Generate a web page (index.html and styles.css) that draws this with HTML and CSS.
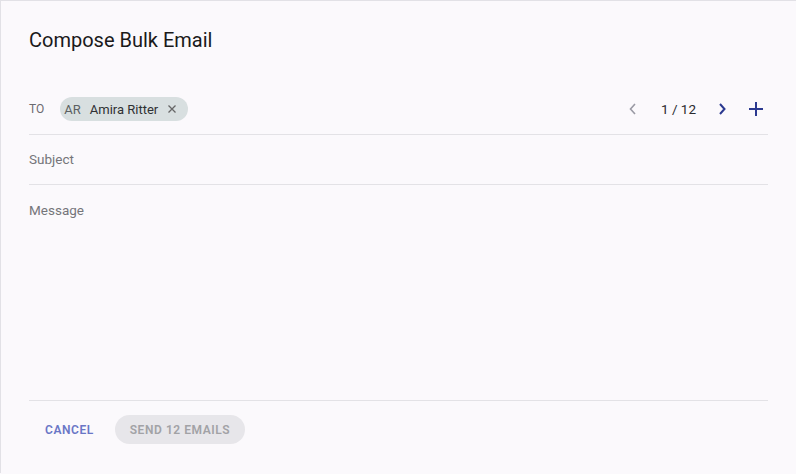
FILE: index.html
```html
<!DOCTYPE html>
<html lang="en">
<head>
  <meta charset="UTF-8">
  <meta name="viewport" content="width=device-width, initial-scale=1.0">
  <title>Compose Bulk Email</title>
  <link rel="stylesheet" href="styles.css">
</head>
<body>
  <div class="dialog">
    <h1 class="dialog-title">Compose Bulk Email</h1>

    <!-- recipients -->
    <div class="to-row">
      <span class="to-label">TO</span>
      <span class="chip">
        <span class="chip-initials">AR</span>
        <span class="chip-name">Amira Ritter</span>
        <svg class="chip-close" width="10" height="10" viewBox="0 0 10 10">
          <path d="M1.5 1.5 L8.5 8.5 M8.5 1.5 L1.5 8.5" stroke="#666" stroke-width="1.3" fill="none"/>
        </svg>
      </span>

      <div class="pager">
        <svg class="pager-btn" width="12" height="14" viewBox="0 0 12 14">
          <path d="M8 2 L3.5 7 L8 12" stroke="#9a9aa4" stroke-width="1.6" fill="none"/>
        </svg>
        <span class="pager-count">1 / 12</span>
        <svg class="pager-btn" width="12" height="14" viewBox="0 0 12 14">
          <path d="M4 2 L8.5 7 L4 12" stroke="#2b3990" stroke-width="2" fill="none"/>
        </svg>
        <svg class="pager-add" width="16" height="16" viewBox="0 0 16 16">
          <path d="M8 1 V15 M1 8 H15" stroke="#2b3990" stroke-width="2" fill="none"/>
        </svg>
      </div>
    </div>

    <div class="subject-row">Subject</div>

    <div class="message-area">Message</div>

    <div class="dialog-actions">
      <button class="btn-cancel">Cancel</button>
      <button class="btn-send" disabled>Send 12 emails</button>
    </div>
  </div>
</body>
</html>
```

FILE: styles.css
```css
body {
    margin: 0;
    background: #fbf9fc;
    font-family: Roboto, "Liberation Sans", sans-serif;
}
.dialog {
    height: 473px;
    padding: 0 28px;
    border-top: 1px solid #e2e1e6;
    border-left: 1px solid #e2e1e6;
    background: #fbf9fc;
    box-sizing: border-box;
}
.dialog-title {
    margin: 23px 0 0;
    font-size: 20px;
    font-weight: 400;
    line-height: 32px;
    color: #1a1a1a;
}
.to-row {
    display: flex;
    align-items: center;
    height: 50px;
    margin-top: 28px;
    border-bottom: 1px solid #e3e2e6;
}
.to-label {
    font-size: 12px;
    color: #6b6b70;
    margin-right: 16px;
}
.chip {
    display: flex;
    align-items: center;
    height: 24px;
    padding: 0 11px 0 4px;
    border-radius: 12px;
    background: #d8dfe0;
}
.chip-initials {
    font-size: 13px;
    color: #5b5f62;
    margin-right: 9px;
}
.chip-name {
    font-size: 13px;
    color: #2f3133;
    margin-right: 9px;
}
.pager {
    display: flex;
    align-items: center;
    margin-left: auto;
}
.pager-count {
    font-size: 13.5px;
    color: #2a2a2e;
    margin: 0 20px 0 22px;
}
.pager-add {
    margin-left: 20px;
    margin-right: 4px;
}
.subject-row {
    height: 49px;
    line-height: 49px;
    font-size: 13.5px;
    color: #75757a;
    border-bottom: 1px solid #e3e2e6;
}
.message-area {
    height: 216px;
    padding-top: 15px;
    box-sizing: border-box;
    line-height: 20px;
    font-size: 13.5px;
    color: #75757a;
    border-bottom: 1px solid #e3e2e6;
}
.dialog-actions {
    display: flex;
    align-items: center;
    gap: 5px;
    padding-top: 14px;
}
.dialog-actions button {
    font-family: Roboto, "Liberation Sans", sans-serif;
    font-size: 12px;
    font-weight: 600;
    letter-spacing: 0.55px;
    text-transform: uppercase;
    border: none;
    height: 29px;
    border-radius: 15px;
}
.btn-cancel {
    background: none;
    color: #6a76c6;
    padding: 0 16px;
}
.btn-send {
    background: #e7e6ea;
    color: #a2a2a6;
    padding: 0 15px;
}
```
